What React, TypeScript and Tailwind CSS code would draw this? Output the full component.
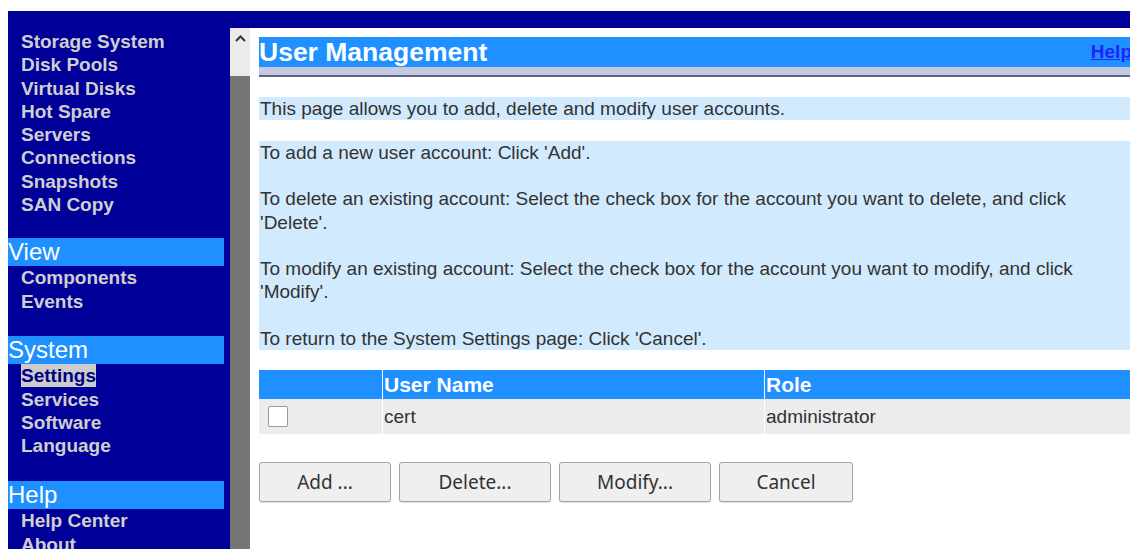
import React from "react";

const navGroups: { title?: string; items: string[]; active?: string; gap: string }[] = [
  {
    gap: "",
    items: [
      "Storage System",
      "Disk Pools",
      "Virtual Disks",
      "Hot Spare",
      "Servers",
      "Connections",
      "Snapshots",
      "SAN Copy",
    ],
  },
  { gap: "mt-[22px]", title: "View", items: ["Components", "Events"] },
  {
    gap: "mt-[23.4px]",
    title: "System",
    items: ["Settings", "Services", "Software", "Language"],
    active: "Settings",
  },
  { gap: "mt-[23.8px]", title: "Help", items: ["Help Center", "About"] },
];

function Sidebar() {
  return (
    <nav className="w-[222px] shrink-0 pt-[19px] font-['Liberation_Sans',Arial,sans-serif]">
      {navGroups.map((g, gi) => (
        <div key={gi} className={g.gap}>
          {g.title && (
            <div className="w-[216px] h-[28px] bg-[#1e90ff] text-white text-[24px] leading-[28px]">
              {g.title}
            </div>
          )}
          {g.items.map((it) => (
            <div key={it} className="pl-[13px] h-[23.3px] leading-[23.3px] text-[19px] font-bold">
              {it === g.active ? (
                <span className="inline-block bg-[#cccccc] text-[#000080] leading-[23px]">{it}</span>
              ) : (
                <span className="text-[#cfcfcf]">{it}</span>
              )}
            </div>
          ))}
        </div>
      ))}
    </nav>
  );
}

function ScrollBar() {
  return (
    <div className="w-[20px] shrink-0 flex flex-col">
      <div className="h-[48px] bg-[#ebebeb] flex justify-center pt-[7px]">
        <svg width="11" height="7" viewBox="0 0 11 7">
          <polyline points="1,6 5.5,1.5 10,6" fill="none" stroke="#333" strokeWidth="2" />
        </svg>
      </div>
      <div className="flex-1 bg-[#757575]" />
    </div>
  );
}

const btn =
  "h-[40px] rounded-[3px] border border-[#a3a3a3] bg-[#efefef] text-[#333] text-[19px] font-['Noto_Sans',sans-serif] shadow-[0_1px_1px_rgba(0,0,0,0.12)]";

function Content() {
  return (
    <main className="flex-1 bg-white overflow-hidden pt-[9px] pl-[9px] font-['Liberation_Sans',Arial,sans-serif] text-[#333]">
      <div className="w-[874px]">
        <div className="h-[30px] bg-[#1e90ff] flex items-center justify-between">
          <h1 className="text-white text-[26.5px] font-bold leading-[30px]">User Management</h1>
          <a href="#" className="text-[#2222ff] text-[19px] font-bold underline leading-[30px] pr-[1px]">
            Help
          </a>
        </div>
        <div className="h-[8px] bg-[#c5c9e0]" />
        <div className="h-[2px] bg-[#5f6388]" />

        <div className="mt-[20px] bg-[#d2eafd] text-[19px] leading-[23px] pl-[1px]">
          This page allows you to add, delete and modify user accounts.
        </div>

        <div className="mt-[21px] bg-[#d2eafd] text-[19px] leading-[23.2px] pl-[1px] flex flex-col gap-[23.2px]">
          <p>To add a new user account: Click 'Add'.</p>
          <p>
            To delete an existing account: Select the check box for the account you want to delete, and click
            'Delete'.
          </p>
          <p>
            To modify an existing account: Select the check box for the account you want to modify, and click
            'Modify'.
          </p>
          <p>To return to the System Settings page: Click 'Cancel'.</p>
        </div>

        <div className="mt-[20px] grid grid-cols-[123px_381px_1fr] gap-x-[1px]">
          <div className="h-[29px] bg-[#1e90ff]" />
          <div className="h-[29px] bg-[#1e90ff] text-white text-[21px] font-bold leading-[29px] pl-[1px]">
            User Name
          </div>
          <div className="h-[29px] bg-[#1e90ff] text-white text-[21px] font-bold leading-[29px] pl-[1px]">
            Role
          </div>
          <div className="h-[35px] bg-[#ececec] flex items-center pl-[9px]">
            <span className="w-[20px] h-[21px] bg-white border border-[#9a9a9a] rounded-[2px]" />
          </div>
          <div className="h-[35px] bg-[#ececec] text-[19px] leading-[35px] pl-[1px]">cert</div>
          <div className="h-[35px] bg-[#ececec] text-[19px] leading-[35px] pl-[1px]">administrator</div>
        </div>

        <div className="mt-[28px] flex gap-[8px]">
          <button className={`${btn} w-[132px]`}>Add ...</button>
          <button className={`${btn} w-[152px]`}>Delete...</button>
          <button className={`${btn} w-[152px]`}>Modify...</button>
          <button className={`${btn} w-[134px]`}>Cancel</button>
        </div>
      </div>
    </main>
  );
}

export default function App() {
  return (
    <div className="w-[1130px] h-[549px] bg-white overflow-hidden pl-[8px] pt-[11px]">
      <div className="h-full bg-[#000099] flex">
        <Sidebar />
        <div className="flex-1 flex flex-col pt-[17px] min-w-0">
          <div className="flex-1 flex min-h-0">
            <ScrollBar />
            <Content />
          </div>
        </div>
      </div>
    </div>
  );
}
